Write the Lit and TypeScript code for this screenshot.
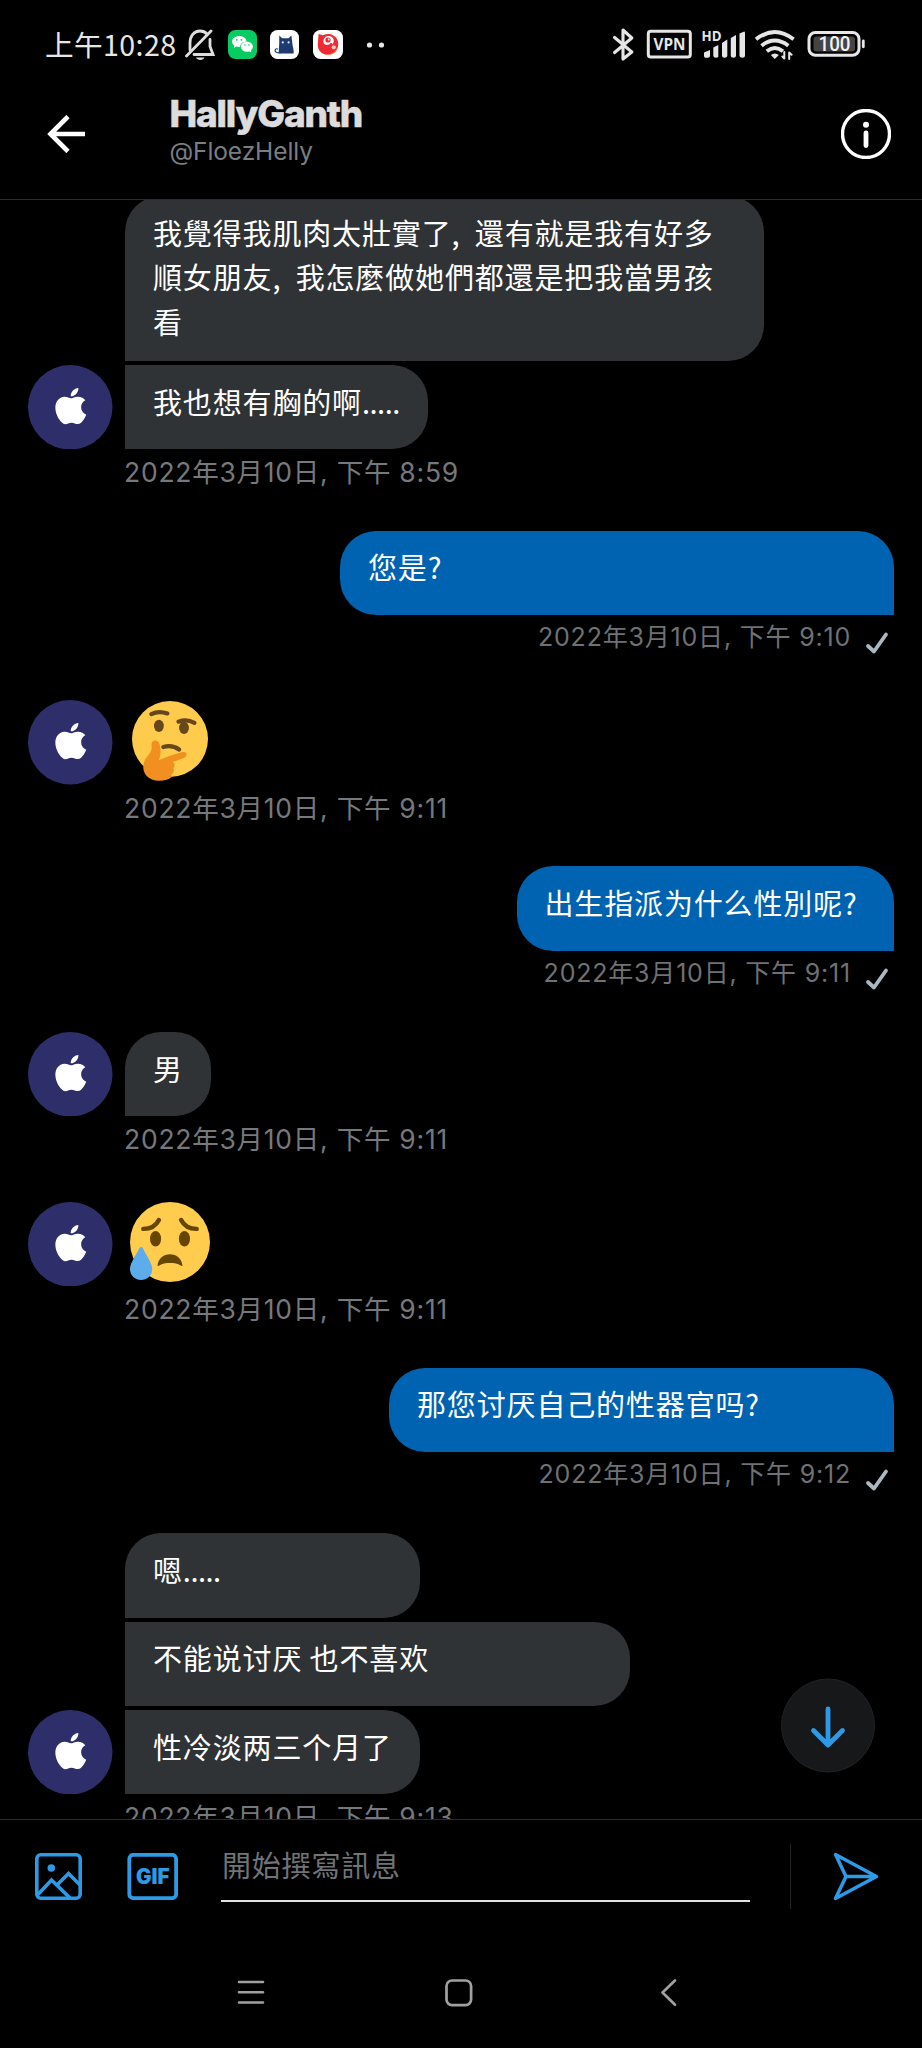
import { LitElement, html, css, svg, nothing } from "lit";
import { customElement, property } from "lit/decorators.js";
import { classMap } from "lit/directives/class-map.js";
import { styleMap } from "lit/directives/style-map.js";

type Emoji = "thinking" | "sad";
interface Bubble {
  lines?: string[];
  width?: number;
  tall?: boolean;
  emoji?: Emoji;
}
interface Group {
  mine: boolean;
  time: string;
  bubbles: Bubble[];
}

const GROUPS: Group[] = [
  {
    mine: false,
    time: "2022年3月10日, 下午 8:59",
    bubbles: [
      {
        lines: ["我覺得我肌肉太壯實了, 還有就是我有好多", "順女朋友, 我怎麼做她們都還是把我當男孩", "看"],
        width: 639,
        tall: true,
      },
      { lines: ["我也想有胸的啊....."], width: 303 },
    ],
  },
  { mine: true, time: "2022年3月10日, 下午 9:10", bubbles: [{ lines: ["您是?"], width: 554 }] },
  { mine: false, time: "2022年3月10日, 下午 9:11", bubbles: [{ emoji: "thinking" }] },
  { mine: true, time: "2022年3月10日, 下午 9:11", bubbles: [{ lines: ["出生指派为什么性別呢?"], width: 377.5 }] },
  { mine: false, time: "2022年3月10日, 下午 9:11", bubbles: [{ lines: ["男"], width: 86 }] },
  { mine: false, time: "2022年3月10日, 下午 9:11", bubbles: [{ emoji: "sad" }] },
  { mine: true, time: "2022年3月10日, 下午 9:12", bubbles: [{ lines: ["那您讨厌自己的性器官吗?"], width: 505 }] },
  {
    mine: false,
    time: "2022年3月10日, 下午 9:13",
    bubbles: [
      { lines: ["嗯....."], width: 295 },
      { lines: ["不能说讨厌 也不喜欢"], width: 505 },
      { lines: ["性冷淡两三个月了"], width: 295 },
    ],
  },
];

const thinking = svg`
  <circle cx="18" cy="17.1" r="17.1" fill="#ffcb4c"/>
  <g fill="#65471b">
    <ellipse cx="13" cy="11.2" rx="2.2" ry="2.8"/>
    <ellipse cx="24.3" cy="12.1" rx="2.2" ry="2.8"/>
  </g>
  <g fill="none" stroke="#65471b" stroke-width="1.9" stroke-linecap="round">
    <path d="M9.6 5.9Q12.9 4.2 16.8 5.6"/>
    <path d="M21.8 9.3Q25.5 8 29 9.8"/>
    <path d="M15 20.7Q19 19.6 22.1 21.8"/>
  </g>
  <path fill="#f19020" d="M9.7 20C9.3 17.4 12.4 17 13.3 19.3C14 21.6 14 24 13 26.7C16 25.5 20 23.9 23.6 23C25.8 22.6 26 25 24.2 25.6L19.3 27.4C20.4 28.3 20.2 29.6 19.4 30.2C20.2 31.3 19.6 32.6 18.6 33C19.2 34.3 18 35 16.5 35.4C13 36.4 9.5 36 7.2 33.4C5.6 31.2 5.6 28.5 7 26C8.8 23.8 10.1 22.3 9.7 20Z"/>`;

const sad = svg`
  <circle cx="18" cy="18" r="18" fill="#ffcc4d"/>
  <g fill="#664500">
    <ellipse cx="11.5" cy="16.5" rx="2.5" ry="3.5"/>
    <ellipse cx="24.5" cy="16.5" rx="2.5" ry="3.5"/>
    <path d="M12.4 28.3C13 25.2 15.2 23.5 18 23.5C20.8 23.5 23 25.2 23.6 28.3C23.7 28.9 23.2 28.9 22.8 28.6C21.5 27.7 20 27.5 18 27.5C16 27.5 14.5 27.7 13.2 28.6C12.7 28.9 12.3 28.9 12.4 28.3Z"/>
  </g>
  <g fill="none" stroke="#664500" stroke-width="2" stroke-linecap="round">
    <path d="M6 12.1Q11 12.1 13 8.1"/>
    <path d="M30 12.1Q25 12.1 23 8.1"/>
  </g>
  <path fill="#5dadec" d="M10 30.2C10 33 7.8 35.1 5 35.1S0 33 0 30.2C0 27.4 2.6 24.2 4.2 20.8C4.6 20 5.4 20 5.8 20.8C7.4 24.2 10 27.4 10 30.2Z"/>`;

@customElement("status-bar")
class StatusBar extends LitElement {
  static styles = css`
    :host {
      display: flex;
      align-items: center;
      height: 89px;
      padding: 0 57px 0 45px;
      box-sizing: border-box;
      color: #e6e6e6;
    }
    .clock {
      width: 140px;
      font: 400 28.6px/40px "Noto Sans CJK SC", sans-serif;
      white-space: nowrap;
      letter-spacing: 0.4px;
      margin-top: -2px;
    }
    .left,
    .right {
      display: flex;
      align-items: center;
    }
    .right {
      margin-left: auto;
    }
    svg {
      display: block;
    }
    .app {
      margin-left: 13.6px;
    }
    .wechat {
      margin-left: 12.6px;
    }
    .dots {
      margin-left: 23px;
    }
    .net {
      font: 700 14px "Open Sans", sans-serif;
    }
    .vpn {
      font: 700 16.5px "Open Sans", sans-serif;
    }
    .pct {
      font: 500 20px "Roboto", sans-serif;
    }
  `;
  render() {
    return html`
      <span class="clock">上午10:28</span>
      <div class="left">
        <svg width="30" height="34" viewBox="0 0 30 34" fill="none" stroke="#dedede" stroke-width="2.8" stroke-linecap="round">
          <path d="M5 22V15C5 8 9 3 15 3C18 3 20.3 4 22 6"/>
          <path d="M25 11.5V18.5L28 26.5H9"/>
          <path d="M26 3L1.5 28" />
          <path d="M11 29.5H19.5C18.5 32.8 12 32.8 11 29.5Z" fill="#dedede" stroke="none"/>
        </svg>
        <svg class="wechat" width="29" height="29" viewBox="0 0 29 29">
          <rect width="29" height="29" rx="7.5" fill="#07cc62"/>
          <g fill="#fff">
            <path d="M11.2 6C15.2 6 18.4 8.4 18.4 11.4C14.7 11.5 12 13.8 12.2 17C10.8 17.2 9.4 17 8.2 16.6L5.8 17.9L6.4 15.7C4.9 14.7 4 13.2 4 11.6C4 8.5 7.2 6 11.2 6Z"/>
            <ellipse cx="18.9" cy="16.6" rx="6" ry="5.2"/>
            <path d="M20 20.5L23.3 22.6L22.8 19.8Z"/>
          </g>
          <g fill="#07cc62">
            <circle cx="8.8" cy="9.8" r=".9"/><circle cx="13.4" cy="9.8" r=".9"/>
            <circle cx="17" cy="15" r=".8"/><circle cx="20.9" cy="15" r=".8"/>
          </g>
        </svg>
        <svg class="app" width="29" height="29" viewBox="0 0 29 29">
          <rect width="29" height="29" rx="7.5" fill="#fff"/>
          <path fill="#1d3b72" d="M9.3 5.5L12.2 8.3H18.5L21.4 5.5L22.3 13C22.3 16 24 19 23.7 23.6H8.6L9.2 14Z"/>
          <path fill="none" stroke="#1d3b72" stroke-width="1.1" d="M8 19.2C5.5 17.5 4 21 6.3 22.2C8 23 10 22.8 11 22.8"/>
          <circle cx="12.8" cy="12.4" r="1.1" fill="#dce8f6"/><circle cx="18.6" cy="12.4" r="1.1" fill="#dce8f6"/>
        </svg>
        <svg class="app" width="30" height="29" viewBox="0 0 30 29">
          <rect width="30" height="29" rx="7.5" fill="#fff"/>
          <path fill="#ee2b34" d="M5.5 4L10 5.2C16 2.3 21.5 4.5 24 9C27.6 15.5 23.5 24.6 15 24.8C7.5 24.8 3.6 18.4 5 12.2Z"/>
          <path fill="#f97a2c" d="M8 22.3C13 25.8 21.5 25 24.5 17C24 22 20 24.8 15 24.8C12 24.8 9.7 23.9 8 22.3Z"/>
          <path fill="#fff" d="M10.4 11.5C10.4 7.5 14 5.4 17.3 6.2C21 7.2 21.8 11.6 19.5 14.6C19.2 12.6 18 11.9 16.6 14.2C13.5 15.8 10.4 14.8 10.4 11.5Z"/>
          <circle cx="15" cy="10" r="2.6" fill="#ee2b34"/><circle cx="15.7" cy="9.5" r=".9" fill="#fff"/>
          <circle cx="20.8" cy="17.3" r="2.1" fill="#ffc7b8"/>
        </svg>
        <svg class="dots" width="20" height="8" viewBox="0 0 20 8" fill="#e6e6e6">
          <circle cx="3.5" cy="4" r="2.6"/><circle cx="15.5" cy="4" r="2.6"/>
        </svg>
      </div>
      <div class="right">
        <svg width="252" height="36" viewBox="0 0 252 36" fill="none" stroke="#e6e6e6" stroke-linecap="round" stroke-linejoin="round">
          <path stroke-width="3.1" d="M1.6 10.5L18.8 25L10 32V3L18.8 11L1.6 25.5"/>
          <rect x="35.3" y="4.3" width="42" height="25.6" rx="2.5" stroke-width="3"/>
          <g fill="#e6e6e6" stroke="none">
            <text class="vpn" x="40.5" y="23.2" textLength="32" lengthAdjust="spacingAndGlyphs">VPN</text>
            <text class="net" x="88.5" y="14.4" textLength="20" lengthAdjust="spacingAndGlyphs">HD</text>
            <path d="M91 28.5V25.5L97 23V28.5Q97 30.8 95 30.8H92Q91 30.6 91 28.5Z"/>
            <path d="M100.3 20.5L105.3 18V29.5Q105 30.8 102.8 30.8T100.3 29Z"/>
            <path d="M109 16L114.3 12.5V29Q114 30.8 111.6 30.8T109 29Z"/>
            <path d="M117.8 11L123 8V29Q122.8 30.8 120.4 30.8T117.8 29Z"/>
            <path d="M126.5 6.5L131.3 4.5Q132 4.5 132 6V29Q131.8 30.8 129.3 30.8T126.5 29Z"/>
          </g>
          <g stroke-width="3.9" stroke-linecap="butt">
            <path d="M143 12.3Q161.8 -2.2 180.6 12.3"/>
            <path d="M148.5 18.7Q161.8 8.5 175.3 18.7"/>
            <path d="M153.8 24.2Q161.8 18 170 24.2"/>
          </g>
          <path fill="#e6e6e6" stroke="none" d="M157.8 28Q161.8 24.8 165.8 28L161.8 32Z"/>
          <path stroke-width="2" d="M171.3 25V31.5L169.3 29.5M176.2 32V25.5L178.6 27.7"/>
          <rect x="196" y="5.5" width="50" height="22.8" rx="6.5" stroke-width="3"/>
          <rect x="200.5" y="9.5" width="41.5" height="15" rx="3" fill="#444" stroke="none"/>
          <path stroke-width="2.8" d="M250.3 14V19.8"/>
          <text class="pct" x="205.5" y="24.2" fill="#f2f2f2" stroke="none" textLength="32" lengthAdjust="spacingAndGlyphs">100</text>
        </svg>
      </div>
    `;
  }
}

@customElement("chat-header")
class ChatHeader extends LitElement {
  static styles = css`
    :host {
      display: flex;
      height: 111px;
      box-sizing: border-box;
      border-bottom: 1px solid #2a2b2d;
      padding: 0 31px 0 47px;
      align-items: flex-start;
    }
    .back {
      margin-top: 26px;
    }
    .who {
      margin: 3.5px 0 0 83.5px;
      white-space: nowrap;
    }
    .name {
      font: 800 37px/42px "Inter", sans-serif;
      letter-spacing: -1.2px;
      color: #dcdcdc;
      -webkit-text-stroke: 0.5px #dcdcdc;
    }
    .handle {
      font: 400 24.5px/30px "Inter", sans-serif;
      letter-spacing: -0.1px;
      color: #7b7d82;
      margin-top: 1.5px;
    }
    .info {
      margin: 20px 0 0 auto;
    }
  `;
  render() {
    return html`
      <svg class="back" width="39" height="38" viewBox="0 0 39 38" fill="none" stroke="#fff" stroke-width="4.6">
        <path d="M38 19H3.5M21 1.5L3.5 19L21 36.5"/>
      </svg>
      <div class="who">
        <div class="name">HallyGanth</div>
        <div class="handle">@FloezHelly</div>
      </div>
      <svg class="info" width="50" height="50" viewBox="0 0 50 50">
        <circle cx="25" cy="25" r="23.5" fill="none" stroke="#fff" stroke-width="3.4"/>
        <circle cx="25" cy="15.7" r="3" fill="#fff"/>
        <path d="M25 24V36.5" stroke="#fff" stroke-width="4.8" stroke-linecap="round"/>
      </svg>
    `;
  }
}

@customElement("message-group")
class MessageGroup extends LitElement {
  @property({ attribute: false }) group!: Group;
  static styles = css`
    :host {
      display: block;
    }
    .emoji-group {
      padding-top: 4px;
    }
    .stack {
      display: flex;
      gap: 12.5px;
      align-items: flex-end;
      padding: 0 28px;
    }
    .bubbles {
      display: flex;
      flex-direction: column;
      gap: 4px;
    }
    .mine .stack {
      justify-content: flex-end;
    }
    .avatar {
      display: block;
      width: 84.5px;
      height: 84.5px;
    }
    .bubble {
      box-sizing: border-box;
      height: 84.3px;
      padding: 13.5px 28px 0;
      background: #2f3336;
      color: #fff;
      border-radius: 0 36px 36px 0;
      font: 400 29px/44.5px "Noto Sans CJK SC", sans-serif;
      letter-spacing: 0.85px;
      white-space: nowrap;
    }
    .bubble:first-child {
      border-top-left-radius: 36px;
    }
    .tall {
      height: 165px;
    }
    .mine .bubble {
      background: #0063b1;
      border-radius: 36px 36px 0 36px;
    }
    .line {
      display: block;
    }
    .comma {
      padding-right: 7px;
    }
    .dots {
      letter-spacing: -0.5px;
    }
    .emoji {
      display: block;
      width: 80px;
      height: 80px;
      margin: 0 0 4.3px 5px;
    }
    .meta {
      display: flex;
      height: 81.4px;
      box-sizing: border-box;
      padding: 4px 28px 0 124px;
      font: 400 26.5px/38px "Inter", "Noto Sans CJK SC", sans-serif;
      letter-spacing: 0.75px;
      color: #75787c;
      white-space: nowrap;
    }
    .mine .meta {
      justify-content: flex-end;
      padding-top: 3px;
      font-size: 25px;
      letter-spacing: 0.8px;
      color: #6e7175;
    }
    .check {
      margin: 13px 5px 0 14px;
    }
  `;

  private line(text: string) {
    if (text.endsWith(".....")) {
      return html`<span class="line">${text.slice(0, -5)}<span class="dots">.....</span></span>`;
    }
    const [head, tail] = text.split(", ");
    return html`<span class="line">${head}${tail ? html`<span class="comma">, </span>${tail}` : nothing}</span>`;
  }

  render() {
    const { mine, bubbles, time } = this.group;
    const emoji = bubbles.some((b) => b.emoji);
    return html`
      <section class=${classMap({ mine, "emoji-group": emoji })}>
        <div class="stack">
          ${mine
            ? nothing
            : html`<svg class="avatar" viewBox="0 0 84 84">
                <circle cx="42" cy="42" r="42" fill="#2e2f6a"/>
                <path fill="#fff" transform="translate(23.7 22.8) scale(1.57 1.5)" d="M12.152 6.896c-.948 0-2.415-1.078-3.96-1.04-2.04.027-3.91 1.183-4.961 3.014-2.117 3.675-.546 9.103 1.519 12.09 1.013 1.454 2.208 3.09 3.792 3.039 1.52-.065 2.09-.987 3.935-.987 1.831 0 2.35.987 3.96.948 1.637-.026 2.676-1.48 3.676-2.948 1.156-1.688 1.636-3.325 1.662-3.415-.039-.013-3.182-1.221-3.22-4.857-.026-3.04 2.48-4.494 2.597-4.559-1.429-2.09-3.623-2.324-4.39-2.376-2-.156-3.675 1.09-4.61 1.09zM15.53 3.83c.843-1.012 1.4-2.427 1.245-3.83-1.207.052-2.662.805-3.532 1.818-.78.896-1.454 2.338-1.273 3.714 1.338.104 2.715-.688 3.559-1.701"/>
              </svg>`}
          <div class="bubbles">
            ${bubbles.map((b) =>
              b.emoji
                ? html`<svg class="emoji" viewBox="0 0 36 36">${b.emoji === "sad" ? sad : thinking}</svg>`
                : html`<div class=${classMap({ bubble: true, tall: !!b.tall })} style=${styleMap({ width: `${b.width}px` })}>
                    ${b.lines!.map((l) => this.line(l))}
                  </div>`
            )}
          </div>
        </div>
        <div class="meta">
          <span>${time}</span>
          ${mine
            ? html`<svg class="check" width="24" height="24" viewBox="0 0 24 24" fill="none" stroke="#aab8c2" stroke-width="3.8" stroke-linecap="round" stroke-linejoin="round">
                <path d="M3 15L9 20.5L21 3.5"/>
              </svg>`
            : nothing}
        </div>
      </section>
    `;
  }
}

@customElement("chat-composer")
class ChatComposer extends LitElement {
  static styles = css`
    :host {
      display: flex;
      height: 119px;
      box-sizing: border-box;
      border-top: 1px solid #2a2b2d;
      padding: 0 42px 0 35px;
      align-items: flex-start;
    }
    svg {
      display: block;
    }
    .pic {
      margin-top: 33px;
    }
    .gif {
      margin: 33px 0 0 45px;
    }
    .giftext {
      font: 900 21px "Inter", sans-serif;
    }
    .field {
      width: 529px;
      height: 82px;
      box-sizing: border-box;
      margin-left: 43px;
      padding: 22px 0 0 1px;
      border-bottom: 2px solid #e2e2e2;
      font: 400 29px/44px "Noto Sans CJK TC", sans-serif;
      letter-spacing: 0.8px;
      color: #707377;
    }
    .rule {
      width: 1px;
      height: 65px;
      margin: 24px 0 0 40px;
      background: #242527;
    }
    .send {
      margin: 32px 0 0 auto;
    }
  `;
  render() {
    return html`
      <svg class="pic" width="47" height="47" viewBox="0 0 47 47" fill="none" stroke="#2d9ae8" stroke-width="3.6">
        <rect x="1.8" y="1.8" width="43.4" height="43.4" rx="4"/>
        <path d="M3 41.5L16.5 27L35 45M22 32L33.5 20.5L45 32"/>
        <circle cx="16.3" cy="15" r="3.8" fill="#2d9ae8" stroke="none"/>
      </svg>
      <svg class="gif" width="51" height="47" viewBox="0 0 51 47">
        <rect x="2.3" y="1.8" width="46.8" height="43.4" rx="4" fill="none" stroke="#2d9ae8" stroke-width="3.8"/>
        <text class="giftext" x="9" y="31" fill="#2d9ae8" textLength="33.5" lengthAdjust="spacingAndGlyphs">GIF</text>
      </svg>
      <div class="field">開始撰寫訊息</div>
      <div class="rule"></div>
      <svg class="send" width="47" height="49" viewBox="0 0 47 49" fill="none" stroke="#2d9ae8" stroke-width="3.5" stroke-linejoin="round">
        <path d="M2.5 2.5L43.5 24.5L2.5 46.5L13 24.5ZM13 24.5H42"/>
      </svg>
    `;
  }
}

@customElement("app-root")
class AppRoot extends LitElement {
  static styles = css`
    :host {
      display: flex;
      flex-direction: column;
      width: 922px;
      height: 2048px;
      background: #000;
      overflow: hidden;
    }
    .thread {
      position: relative;
      height: 1619px;
      overflow: hidden;
    }
    .log {
      margin-top: -4px;
    }
    .jump {
      position: absolute;
      right: 47px;
      bottom: 46px;
      display: block;
    }
    .nav {
      display: grid;
      grid-template-columns: 27px 27px 27px;
      column-gap: 181px;
      padding: 40px 0 0 237px;
    }
  `;
  render() {
    return html`
      <status-bar></status-bar>
      <chat-header></chat-header>
      <div class="thread">
        <div class="log">${GROUPS.map((g) => html`<message-group .group=${g}></message-group>`)}</div>
        <svg class="jump" width="94" height="95" viewBox="0 0 94 95">
          <circle cx="47" cy="47.5" r="46.5" fill="#16181a" stroke="#202224"/>
          <path d="M47 31V66M32.5 52.5L47 67L61.5 52.5" fill="none" stroke="#2d9ae8" stroke-width="4.8" stroke-linecap="round" stroke-linejoin="round"/>
        </svg>
      </div>
      <chat-composer></chat-composer>
      <nav class="nav">
        <svg width="28" height="30" viewBox="0 0 28 30" stroke="#a0a0a0" stroke-width="2.6" stroke-linecap="round">
          <path d="M2 4H26M2 14.2H26M2 24.5H26"/>
        </svg>
        <svg width="28" height="30" viewBox="0 0 28 30" fill="none" stroke="#a0a0a0" stroke-width="2.7">
          <rect x="1.5" y="2.5" width="24.6" height="24.6" rx="5.5"/>
        </svg>
        <svg width="28" height="30" viewBox="0 0 28 30" fill="none" stroke="#a0a0a0" stroke-width="2.7" stroke-linecap="round" stroke-linejoin="round">
          <path d="M22 2.5L9.500 14.500L22 26.800"/>
        </svg>
      </nav>
    `;
  }
}
